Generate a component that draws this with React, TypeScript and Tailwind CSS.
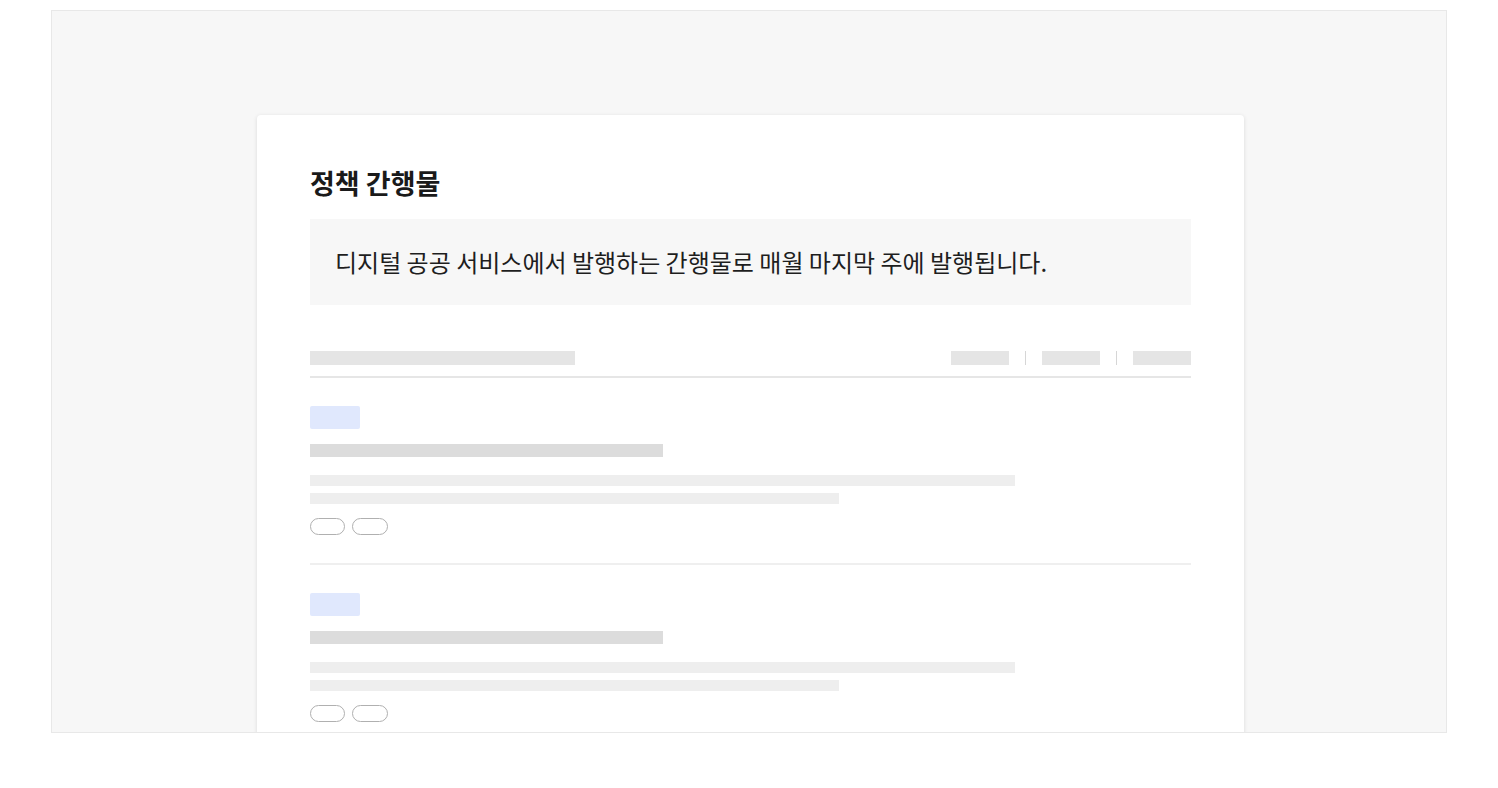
const items = [1, 2]

function HeaderSkeleton() {
  return (
    <div className="flex items-center justify-between border-b-2 border-[#e6e6e6] pb-[11px]">
      <div className="h-[14px] w-[265px] bg-[#e5e5e5]" />
      <div className="flex items-center">
        <div className="h-[14px] w-[58px] bg-[#e5e5e5]" />
        <div className="mx-[16px] h-[14px] w-px bg-[#d6d6d6]" />
        <div className="h-[14px] w-[58px] bg-[#e5e5e5]" />
        <div className="mx-[16px] h-[14px] w-px bg-[#d6d6d6]" />
        <div className="h-[14px] w-[58px] bg-[#e5e5e5]" />
      </div>
    </div>
  )
}

function ItemSkeleton() {
  return (
    <div className="border-b-2 border-[#efefef] pt-[28px] pb-[28px]">
      <div className="h-[23px] w-[50px] rounded-[2px] bg-[#e0e8fd]" />
      <div className="mt-[15px] h-[13px] w-[353px] bg-[#dcdcdc]" />
      <div className="mt-[18px] h-[11px] w-[705px] bg-[#eeeeee]" />
      <div className="mt-[7px] h-[11px] w-[529px] bg-[#eeeeee]" />
      <div className="mt-[14px] flex gap-[7px]">
        <div className="h-[17px] w-[35px] rounded-full border-[1.5px] border-[#b0b0b0]" />
        <div className="h-[17px] w-[36px] rounded-full border-[1.5px] border-[#b0b0b0]" />
      </div>
    </div>
  )
}

export default function App() {
  return (
    <div className="min-h-[788px] bg-white pt-[10px] font-['Noto_Sans_CJK_KR','Noto_Sans',sans-serif]">
      <div className="mx-[51px] h-[723px] overflow-hidden border border-[#e8e8e8] bg-[#f7f7f7]">
        <div className="mt-[104px] ml-[205px] w-[987px] rounded-[4px] bg-white px-[53px] pt-[50px] pb-10 shadow-[0_1px_4px_rgba(0,0,0,0.12)]">
          <h2 className="text-[27px] leading-9 font-bold text-[#1a1a1a]">
            정책 간행물
          </h2>
          <div className="mt-[18px] flex h-[86px] items-center bg-[#f7f7f7] px-[25px]">
            <p className="text-[24px] leading-8 text-[#1e1e1e]">
              디지털 공공 서비스에서 발행하는 간행물로 매월 마지막 주에 발행됩니다.
            </p>
          </div>
          <div className="mt-[46px]">
            <HeaderSkeleton />
          </div>
          {items.map((i) => (
            <ItemSkeleton key={i} />
          ))}
        </div>
      </div>
    </div>
  )
}
